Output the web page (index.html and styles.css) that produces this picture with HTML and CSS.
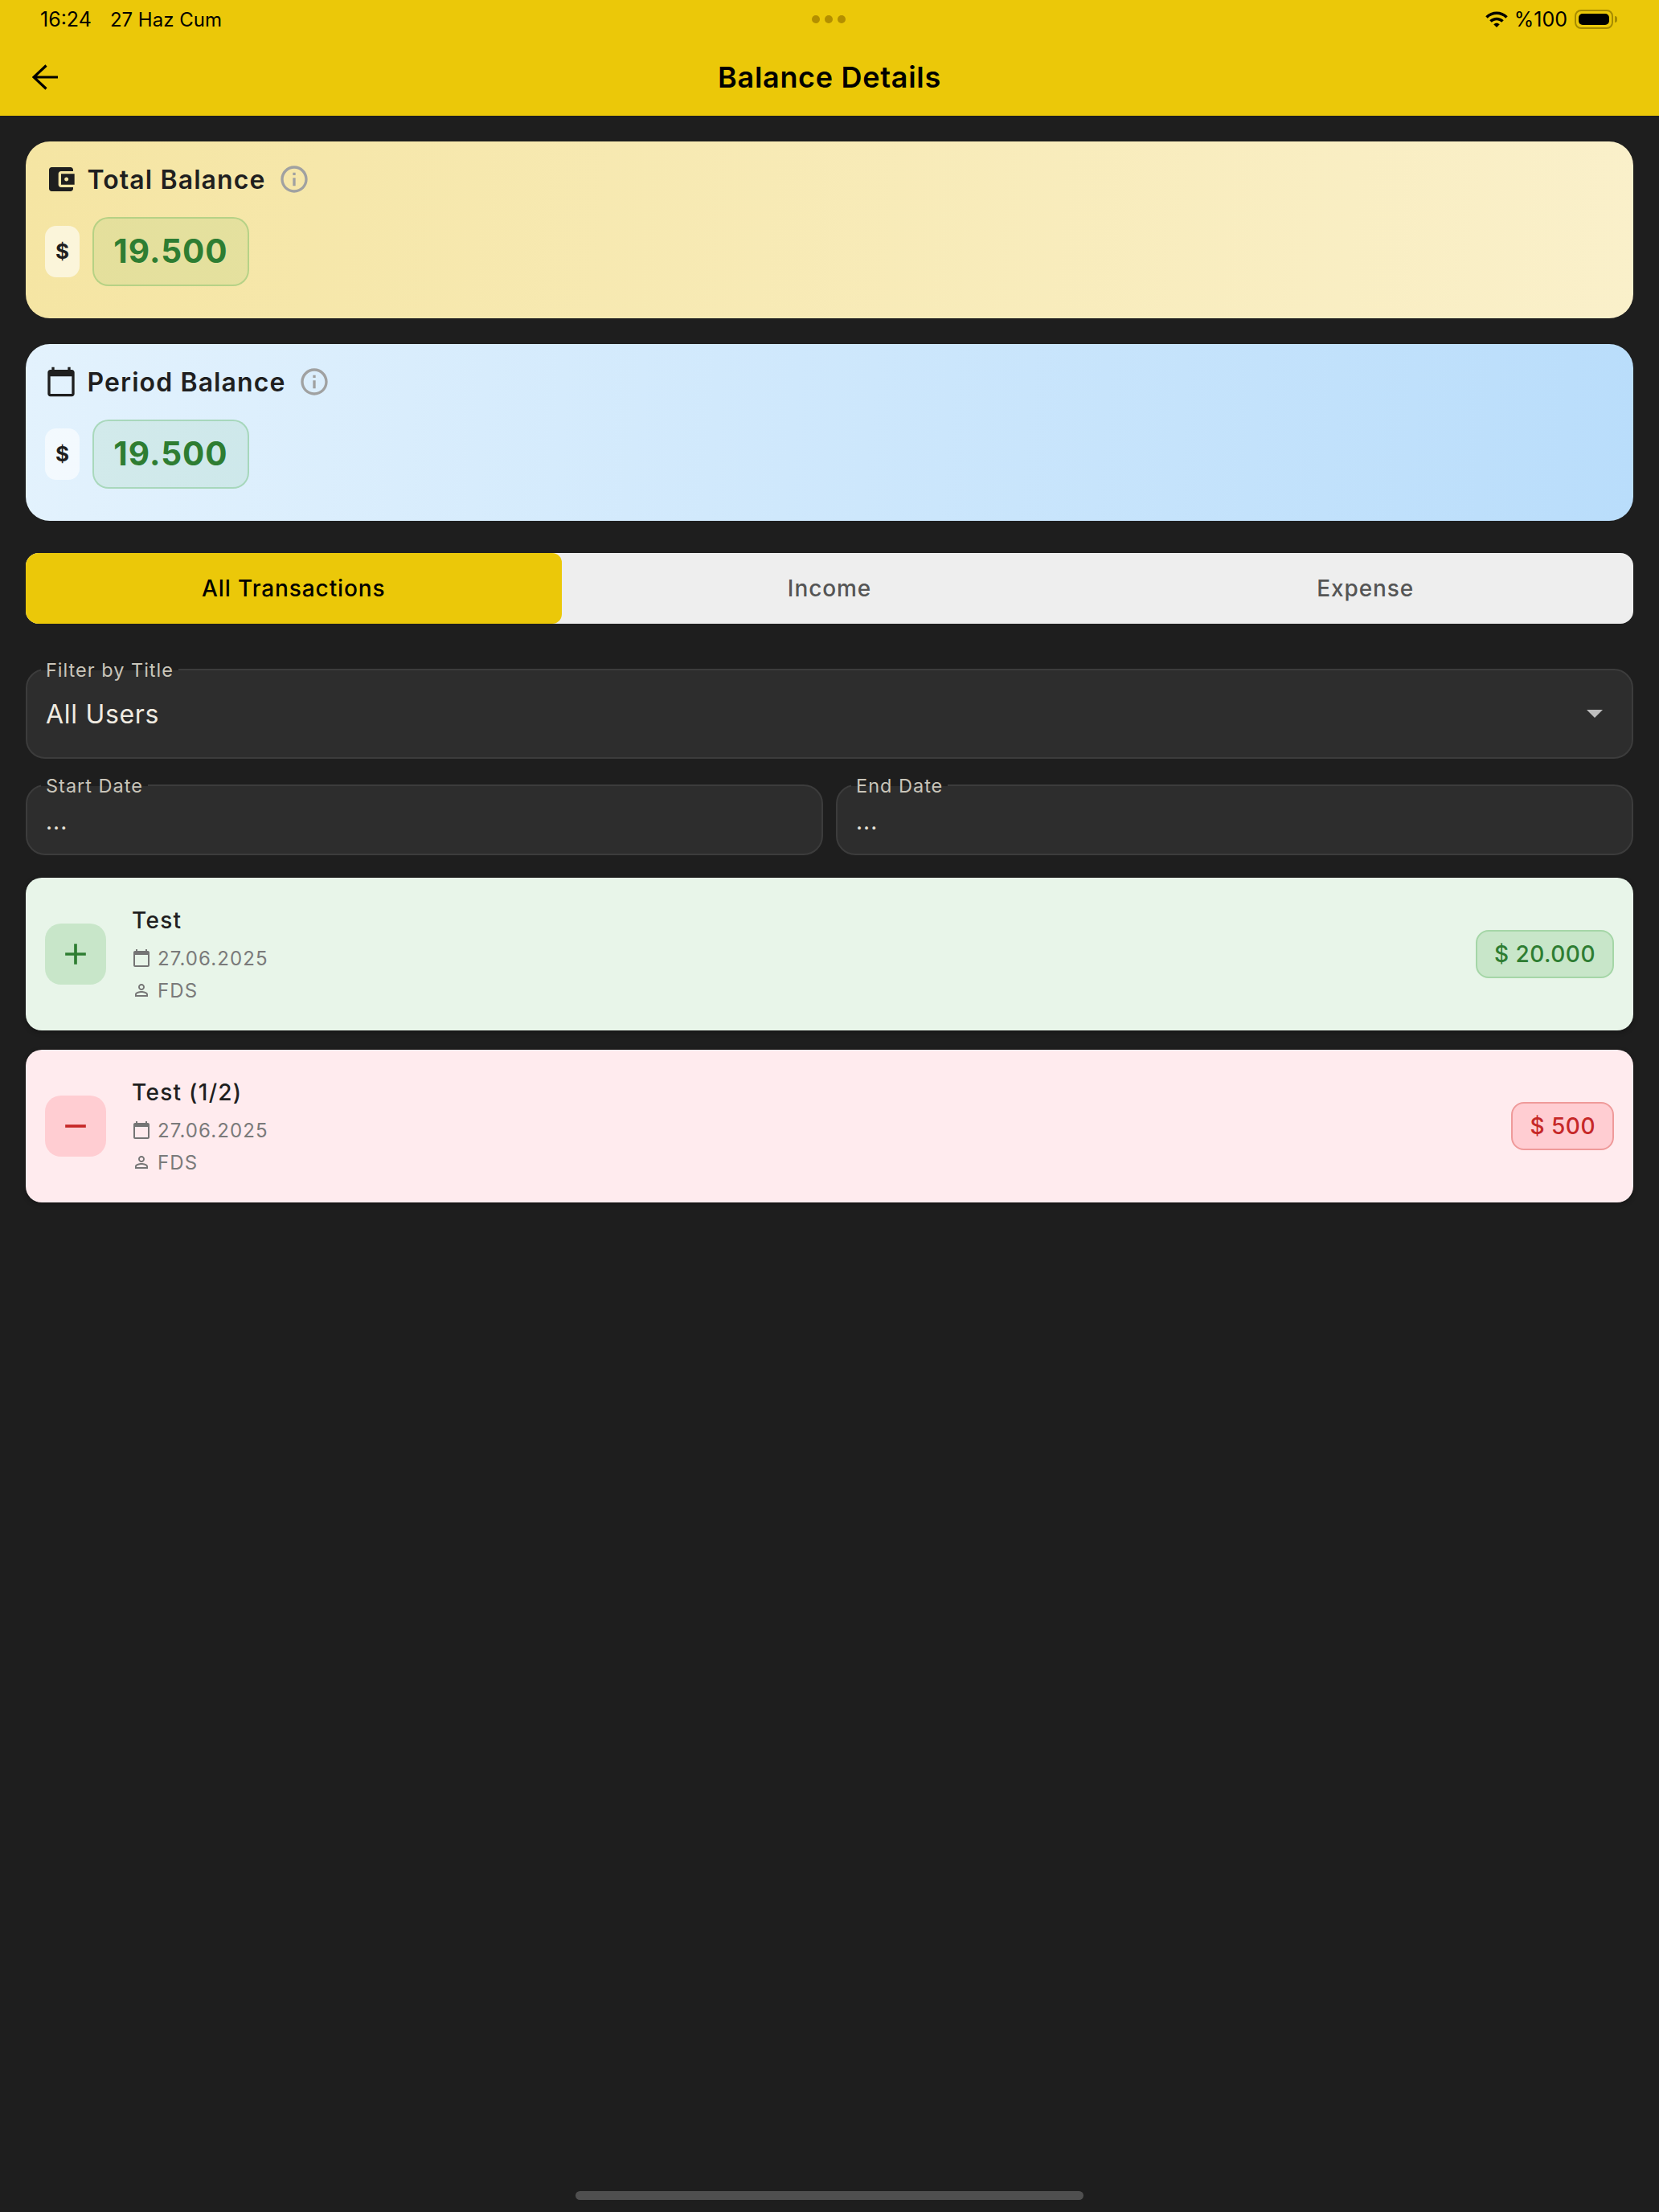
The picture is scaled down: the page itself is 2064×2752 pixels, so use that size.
FILE: index.html
```html
<!DOCTYPE html>
<html lang="en">
<head>
    <meta charset="UTF-8">
    <meta name="viewport" content="width=device-width, initial-scale=1.0">
    <title>Balance Details</title>
    <link rel="stylesheet" href="styles.css">
</head>
<body>
    <div class="page">
        <header class="top">
            <div class="status-bar">
                <div class="status-left">
                    <span>16:24</span>
                    <span class="status-date">27 Haz Cum</span>
                </div>
                <div class="status-dots"><i></i><i></i><i></i></div>
                <div class="status-right">
                    <svg class="wifi" viewBox="0 0 24 24"><path d="M1 9l2 2c4.97-4.97 13.03-4.97 18 0l2-2C16.93 2.93 7.08 2.93 1 9zm8 8l3 3 3-3c-1.65-1.66-4.34-1.66-6 0zm-4-4l2 2c2.76-2.76 7.24-2.76 10 0l2-2C15.14 9.14 8.87 9.14 5 13z"/></svg>
                    <span>%100</span>
                    <div class="battery"><div class="battery-fill"></div></div>
                    <div class="battery-nub"></div>
                </div>
            </div>
            <div class="app-bar">
                <svg class="back" viewBox="0 0 32 32"><path d="M32 16H2M17.5 1.5L2 16l15.500 14.500" fill="none" stroke="#000" stroke-width="3.200"/></svg>
                <h1>Balance Details</h1>
            </div>
        </header>

        <main class="content">
            <section class="balance-card total">
                <div class="balance-title">
                    <svg class="icon-40" viewBox="0 0 24 24"><path d="M21 18v1c0 1.100-.9 2-2 2H5c-1.110 0-2-.9-2-2V5c0-1.100.89-2 2-2h14c1.100 0 2 .9 2 2v1h-9c-1.110 0-2 .9-2 2v8c0 1.100.89 2 2 2h9zm-9-2h10V8H12v8zm4-2.500c-.83 0-1.500-.67-1.500-1.500s.67-1.500 1.500-1.500 1.500.67 1.500 1.500-.67 1.500-1.500 1.500z"/></svg>
                    <h2>Total Balance</h2>
                    <svg class="icon-40 info" viewBox="0 0 24 24"><path d="M11 7h2v2h-2zm0 4h2v6h-2zm1-9C6.480 2 2 6.480 2 12s4.480 10 10 10 10-4.480 10-10S17.520 2 12 2zm0 18c-4.410 0-8-3.590-8-8s3.590-8 8-8 8 3.590 8 8-3.590 8-8 8z"/></svg>
                </div>
                <div class="balance-row">
                    <span class="currency">$</span>
                    <span class="amount">19.500</span>
                </div>
            </section>

            <section class="balance-card period">
                <div class="balance-title">
                    <svg class="icon-40" viewBox="0 0 24 24"><path d="M20 3h-1V1h-2v2H7V1H5v2H4c-1.100 0-2 .9-2 2v16c0 1.100.9 2 2 2h16c1.100 0 2-.9 2-2V5c0-1.100-.9-2-2-2zm0 18H4V8h16v13z"/></svg>
                    <h2>Period Balance</h2>
                    <svg class="icon-40 info" viewBox="0 0 24 24"><path d="M11 7h2v2h-2zm0 4h2v6h-2zm1-9C6.480 2 2 6.480 2 12s4.480 10 10 10 10-4.480 10-10S17.520 2 12 2zm0 18c-4.410 0-8-3.590-8-8s3.590-8 8-8 8 3.590 8 8-3.590 8-8 8z"/></svg>
                </div>
                <div class="balance-row">
                    <span class="currency">$</span>
                    <span class="amount">19.500</span>
                </div>
            </section>

            <nav class="tabs">
                <div class="tab active">All Transactions</div>
                <div class="tab">Income</div>
                <div class="tab">Expense</div>
            </nav>

            <div class="field filter">
                <label>Filter by Title</label>
                <span class="field-value">All Users</span>
                <svg class="caret" viewBox="0 0 24 24"><path d="M7 10l5 5 5-5z"/></svg>
            </div>

            <div class="date-row">
                <div class="field date">
                    <label>Start Date</label>
                    <span class="field-dots">...</span>
                </div>
                <div class="field date">
                    <label>End Date</label>
                    <span class="field-dots">...</span>
                </div>
            </div>

            <article class="tx income">
                <div class="tx-icon">
                    <svg viewBox="0 0 24 24"><path d="M19 13h-6v6h-2v-6H5v-2h6V5h2v6h6v2z"/></svg>
                </div>
                <div class="tx-info">
                    <div class="tx-title">Test</div>
                    <div class="tx-meta tx-date">
                        <svg viewBox="0 0 24 24"><path d="M20 3h-1V1h-2v2H7V1H5v2H4c-1.100 0-2 .9-2 2v16c0 1.100.9 2 2 2h16c1.100 0 2-.9 2-2V5c0-1.100-.9-2-2-2zm0 18H4V8h16v13z"/></svg>
                        <span>27.06.2025</span>
                    </div>
                    <div class="tx-meta">
                        <svg viewBox="0 0 24 24"><path d="M12 5.900c1.160 0 2.100.94 2.100 2.100s-.94 2.100-2.100 2.100S9.900 9.160 9.900 8s.94-2.100 2.100-2.100m0 9c2.970 0 6.100 1.460 6.100 2.100v1.100H5.900V17c0-.64 3.130-2.100 6.100-2.100M12 4C9.790 4 8 5.790 8 8s1.790 4 4 4 4-1.790 4-4-1.790-4-4-4zm0 9c-2.670 0-8 1.340-8 4v3h16v-3c0-2.660-5.330-4-8-4z"/></svg>
                        <span>FDS</span>
                    </div>
                </div>
                <div class="tx-amount">$ 20.000</div>
            </article>

            <article class="tx expense">
                <div class="tx-icon">
                    <svg viewBox="0 0 24 24"><path d="M19 13H5v-2h14v2z"/></svg>
                </div>
                <div class="tx-info">
                    <div class="tx-title">Test (1/2)</div>
                    <div class="tx-meta tx-date">
                        <svg viewBox="0 0 24 24"><path d="M20 3h-1V1h-2v2H7V1H5v2H4c-1.100 0-2 .9-2 2v16c0 1.100.9 2 2 2h16c1.100 0 2-.9 2-2V5c0-1.100-.9-2-2-2zm0 18H4V8h16v13z"/></svg>
                        <span>27.06.2025</span>
                    </div>
                    <div class="tx-meta">
                        <svg viewBox="0 0 24 24"><path d="M12 5.900c1.160 0 2.100.94 2.100 2.100s-.94 2.100-2.100 2.100S9.900 9.160 9.900 8s.94-2.100 2.100-2.100m0 9c2.970 0 6.100 1.460 6.100 2.100v1.100H5.900V17c0-.64 3.130-2.100 6.100-2.100M12 4C9.790 4 8 5.790 8 8s1.790 4 4 4 4-1.790 4-4-1.790-4-4-4zm0 9c-2.670 0-8 1.340-8 4v3h16v-3c0-2.660-5.330-4-8-4z"/></svg>
                        <span>FDS</span>
                    </div>
                </div>
                <div class="tx-amount">$ 500</div>
            </article>
        </main>

        <div class="home-bar"></div>
    </div>
</body>
</html>
```

FILE: styles.css
```css
* {
    box-sizing: border-box;
}
body {
    margin: 0;
    background-color: #1e1e1e;
    font-family: Inter, "Noto Sans", sans-serif;
    color: #1f1f1f;
}
h1, h2 {
    margin: 0;
}
.page {
    display: flex;
    flex-direction: column;
    height: 2752px;
    overflow: hidden;
}

/* status bar + app bar */
.top {
    height: 144px;
    background-color: #ebc809;
    color: #000;
}
.status-bar {
    display: grid;
    grid-template-columns: 1fr auto 1fr;
    align-items: center;
    height: 48px;
    padding: 0 52px 0 50px;
    font-size: 25px;
}
.status-left {
    display: flex;
    align-items: center;
    gap: 23px;
}
.status-date {
    font-size: 24px;
}
.status-dots {
    display: flex;
    gap: 6px;
}
.status-dots i {
    width: 10px;
    height: 10px;
    border-radius: 50%;
    background-color: #b38f00;
}
.status-right {
    display: flex;
    align-items: center;
    justify-content: flex-end;
}
.wifi {
    width: 30px;
    height: 30px;
    margin-right: 7px;
}
.battery {
    width: 48px;
    height: 24px;
    margin-left: 9px;
    padding: 3px;
    border: 2px solid #a68b00;
    border-radius: 8px;
}
.battery-fill {
    height: 100%;
    border-radius: 5px;
    background-color: #000;
}
.battery-nub {
    width: 3px;
    height: 8px;
    margin-left: 2px;
    border-radius: 0 4px 4px 0;
    background-color: #a68b00;
}
.app-bar {
    display: flex;
    align-items: center;
    justify-content: center;
    position: relative;
    height: 96px;
}
.app-bar h1 {
    font-size: 36px;
    font-weight: 600;
    letter-spacing: 0.7px;
}
.back {
    position: absolute;
    left: 40px;
    top: 32px;
    width: 32px;
    height: 32px;
}

.content {
    padding: 32px 32px 0;
}

/* balance cards */
.balance-card {
    height: 220px;
    margin-bottom: 32px;
    padding: 24px 24px 0;
    border-radius: 30px;
}
.balance-card.total {
    background: linear-gradient(96deg, #f5e5a3, #faf0ca);
}
.balance-card.period {
    margin-bottom: 40px;
    background: linear-gradient(96deg, #e3f2fd, #b9ddfb);
}
.balance-title {
    display: flex;
    align-items: center;
    height: 46px;
}
.icon-40 {
    width: 40px;
    height: 40px;
    flex-shrink: 0;
    fill: #1f1f1f;
}
.icon-40.info {
    margin-left: 15px;
    fill: #a0a1a1;
}
.balance-title h2 {
    margin-left: 12.500px;
    font-size: 32px;
    font-weight: 600;
    letter-spacing: 1.1px;
}
.balance-row {
    display: flex;
    align-items: center;
    gap: 16px;
    margin-top: 24px;
}
.currency {
    display: flex;
    align-items: center;
    justify-content: center;
    width: 43px;
    height: 64px;
    padding-bottom: 2px;
    border-radius: 14px;
    background-color: rgba(255, 255, 255, 0.6);
    font-size: 26px;
    font-weight: 700;
}
.amount {
    display: flex;
    align-items: center;
    justify-content: center;
    width: 195px;
    height: 86px;
    padding-bottom: 1px;
    border: 2px solid rgba(76, 175, 80, 0.3);
    border-radius: 20px;
    background-color: rgba(76, 175, 80, 0.1);
    color: #2e7d32;
    font-size: 40.500px;
    font-weight: 700;
    letter-spacing: 1px;
}

/* tabs */
.tabs {
    display: grid;
    grid-template-columns: repeat(3, 1fr);
    height: 88px;
    margin-bottom: 56px;
    border-radius: 16px;
    overflow: hidden;
    background-color: #eeeeee;
}
.tab {
    display: flex;
    align-items: center;
    justify-content: center;
    border-radius: 0 12px 12px 0;
    color: #555;
    font-size: 28px;
    font-weight: 500;
    letter-spacing: 0.9px;
}
.tab.active {
    background-color: #ebc809;
    color: #000;
}

/* filter fields */
.field {
    position: relative;
    display: flex;
    align-items: center;
    padding: 0 24px 0 23px;
    border: 2px solid #3c3c3c;
    border-radius: 24px;
    background-color: #2d2d2d;
}
.field label {
    position: absolute;
    left: 17px;
    top: -14px;
    padding: 0 6px;
    height: 28px;
    line-height: 28px;
    background: linear-gradient(#1e1e1e 50%, #2d2d2d 50%);
    color: #c9c5ba;
    font-size: 23.500px;
    letter-spacing: 1px;
}
.filter {
    justify-content: space-between;
    height: 112px;
    margin-bottom: 32px;
}
.field-value {
    color: #f0ebe1;
    font-size: 32px;
    letter-spacing: 0.7px;
}
.caret {
    width: 48px;
    height: 48px;
    margin-right: -2px;
    margin-top: -2px;
    fill: #bdbdbd;
}
.date-row {
    display: grid;
    grid-template-columns: 1fr 1fr;
    gap: 16px;
    margin-bottom: 28px;
}
.date {
    height: 88px;
}
.field-dots {
    margin-top: 4px;
    color: #e6e1d8;
    font-size: 28px;
    letter-spacing: 1px;
}

/* transactions */
.tx {
    display: flex;
    align-items: center;
    height: 190px;
    margin-bottom: 24px;
    padding: 0 24px;
    border-radius: 20px;
    box-shadow: 0 2px 6px rgba(0, 0, 0, 0.3);
}
.tx.income {
    background-color: #e8f5e9;
}
.tx.expense {
    background-color: #ffebee;
}
.tx-icon {
    display: flex;
    align-items: center;
    justify-content: center;
    width: 76px;
    height: 76px;
    margin-right: 32px;
    border-radius: 20px;
}
.tx-icon svg {
    width: 44px;
    height: 44px;
}
.income .tx-icon {
    background-color: #c8e6c9;
    fill: #2e7d32;
}
.expense .tx-icon {
    background-color: #ffcdd2;
    fill: #c62828;
}
.tx-info {
    flex: 1;
}
.tx-title {
    margin-bottom: 16px;
    font-size: 28px;
    font-weight: 500;
    line-height: 34px;
    letter-spacing: 1.3px;
}
.tx-meta {
    display: flex;
    align-items: center;
    gap: 8px;
    height: 28px;
    color: #7a7a7a;
    font-size: 24px;
    letter-spacing: 1.1px;
}
.tx-date {
    margin-bottom: 12px;
}
.tx-meta svg {
    width: 24px;
    height: 24px;
    fill: #757575;
}
.tx-amount {
    display: flex;
    align-items: center;
    height: 60px;
    padding: 0 21px;
    border-radius: 16px;
    border: 2px solid;
    font-size: 28px;
    font-weight: 500;
    letter-spacing: 0.5px;
}
.income .tx-amount {
    border-color: #a5d6a7;
    background-color: #c8e6c9;
    color: #2e7d32;
}
.expense .tx-amount {
    border-color: #ef9a9a;
    background-color: #ffcdd2;
    color: #c62828;
}

.home-bar {
    align-self: center;
    width: 632px;
    height: 11px;
    margin-top: auto;
    margin-bottom: 15px;
    border-radius: 6px;
    background-color: #4f4f4f;
}
```
